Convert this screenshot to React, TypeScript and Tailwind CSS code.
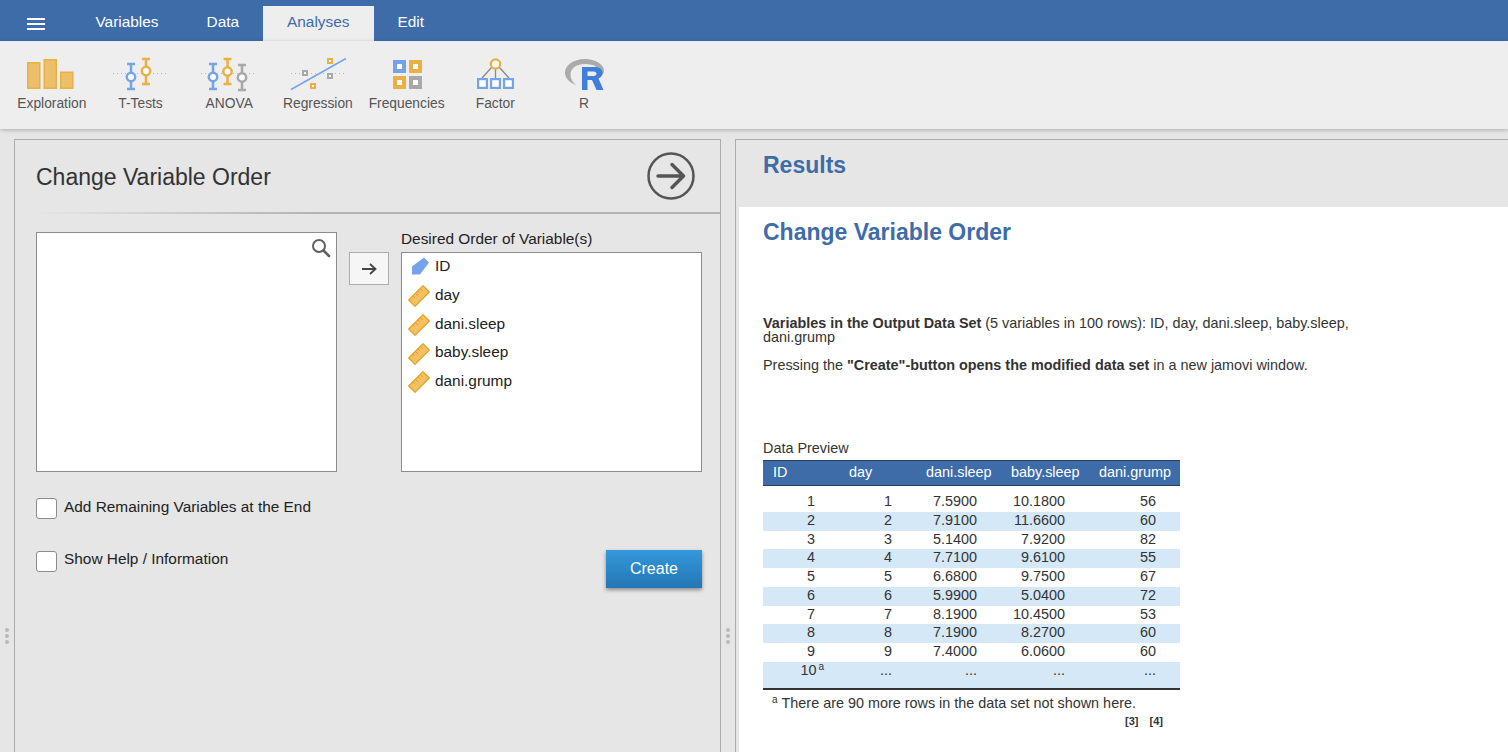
const BLUE = '#74a3ec';
const ORANGE = '#ebb044';
const GREY = '#a8a8a8';

const tabs = ['Variables', 'Data', 'Analyses', 'Edit'];

const rows = [
  ['1', '1', '7.5900', '10.1800', '56'],
  ['2', '2', '7.9100', '11.6600', '60'],
  ['3', '3', '5.1400', '7.9200', '82'],
  ['4', '4', '7.7100', '9.6100', '55'],
  ['5', '5', '6.6800', '9.7500', '67'],
  ['6', '6', '5.9900', '5.0400', '72'],
  ['7', '7', '8.1900', '10.4500', '53'],
  ['8', '8', '7.1900', '8.2700', '60'],
  ['9', '9', '7.4000', '6.0600', '60'],
];

const variables = ['day', 'dani.sleep', 'baby.sleep', 'dani.grump'];

function Whisker({ x, y1, y2, cy, color }: { x: number; y1: number; y2: number; cy: number; color: string }) {
  return (
    <g stroke={color} strokeWidth="2.5" fill="none">
      <path d={`M${x} ${y1}V${cy - 4}M${x} ${cy + 4}V${y2}`} />
      <path d={`M${x - 4} ${y1}H${x + 4}M${x - 4} ${y2}H${x + 4}`} />
      <circle cx={x} cy={cy} r="4.2" fill="#fff" />
    </g>
  );
}

function Dotted({ x1, x2, y }: { x1: number; x2: number; y: number }) {
  return <path d={`M${x1} ${y}H${x2}`} stroke="#b5b5b5" strokeWidth="1" strokeDasharray="1 3" fill="none" />;
}

function Box({ x, y, s, color, w = 2 }: { x: number; y: number; s: number; color: string; w?: number }) {
  return <rect x={x + w / 2} y={y + w / 2} width={s - w} height={s - w} fill="#fff" stroke={color} strokeWidth={w} />;
}

function ToolIcon({ name }: { name: string }) {
  return (
    <svg width="60" height="40" viewBox="0 0 60 40">
      {name === 'Exploration' && (
        <g fill="#ecc06a" stroke={ORANGE} strokeWidth="1.5">
          <rect x="5.75" y="7.75" width="12" height="25.5" />
          <rect x="22.25" y="4.75" width="12" height="28.5" />
          <rect x="38.75" y="17.25" width="12" height="16" />
        </g>
      )}
      {name === 'T-Tests' && (
        <g>
          <Dotted x1={2} x2={57} y={18.5} />
          <Whisker x={20} y1={9} y2={34} cy={22} color={BLUE} />
          <Whisker x={35} y1={4} y2={29} cy={16} color={ORANGE} />
        </g>
      )}
      {name === 'ANOVA' && (
        <g>
          <Dotted x1={2} x2={56} y={18.5} />
          <Whisker x={14} y1={9} y2={34} cy={22} color={BLUE} />
          <Whisker x={28.5} y1={4} y2={29} cy={16.5} color={ORANGE} />
          <Whisker x={43} y1={10} y2={35} cy={22.5} color={GREY} />
        </g>
      )}
      {name === 'Regression' && (
        <g>
          <Dotted x1={3} x2={58} y={18.5} />
          <Box x={14} y={15} s={6} color={GREY} />
          <Box x={39} y={18} s={6} color={GREY} />
          <Box x={39} y={3} s={6} color={ORANGE} />
          <Box x={22} y={28} s={6} color={ORANGE} />
          <path d="M3 34.5L58 3.5" stroke={BLUE} strokeWidth="1.5" fill="none" />
        </g>
      )}
      {name === 'Frequencies' && (
        <g>
          <Box x={16} y={5} s={13} color={BLUE} w={4} />
          <Box x={32} y={5} s={13} color={ORANGE} w={4} />
          <Box x={16} y={21} s={13} color={ORANGE} w={4} />
          <Box x={32} y={21} s={13} color={GREY} w={4} />
        </g>
      )}
      {name === 'Factor' && (
        <g>
          <path d="M27 12L17 23M30.5 14V23M34 12L44 23" stroke="#8a8a8a" strokeWidth="1.3" fill="none" />
          <circle cx="30.5" cy="9" r="4.7" fill="#fff" stroke={ORANGE} strokeWidth="2.2" />
          <Box x={12} y={23} s={11} color={BLUE} w={2.2} />
          <Box x={25} y={23} s={11} color={BLUE} w={2.2} />
          <Box x={38} y={23} s={11} color={BLUE} w={2.2} />
        </g>
      )}
      {name === 'R' && (
        <g>
          <path
            d="M31 4C19 4 11 10.500 11 17.500C11 23 15.500 27.500 22 30C18.500 27 16.500 23.500 16.500 19.500C16.500 13 23 9 31 9C40 9 45.500 12.500 45.500 17.500C45.500 19 45 20.500 44 22C48 21 50 18.500 50 16C50 9 41 4 31 4Z"
            fill="#aaaaaa"
          />
          <path
            fillRule="evenodd"
            d="M28 12H41C46 12 48.500 14.500 48.500 18C48.500 20.500 47 22.500 44.500 23.500L49.500 35H42.500L38 25H33.500V35H28ZM33.500 16.500V21H39.500C41.500 21 42.500 20 42.500 18.800C42.500 17.500 41.500 16.500 39.500 16.500Z"
            fill="#3f7fdc"
          />
        </g>
      )}
    </svg>
  );
}

function Ruler() {
  return (
    <svg width="22" height="22" viewBox="0 0 22 22" className="shrink-0">
      <path d="M15 0.700L21.300 7L7 21.300L0.700 15Z" fill="#f3c163" stroke="#e59f1c" strokeWidth="1.200" strokeLinejoin="round" />
      <path d="M12.500 3.500L15 6M10 6L11.700 7.700M7.500 8.500L10 11M5 11L6.700 12.700" stroke="#e59f1c" strokeWidth="1" fill="none" />
    </svg>
  );
}

function IdTag() {
  return (
    <svg width="18" height="18" viewBox="0 0 18 18" className="shrink-0">
      <path d="M13 0.500L18 5.500L9 17.500H1V9.500Z" fill={BLUE} />
    </svg>
  );
}

function Grip() {
  return (
    <div className="flex flex-col gap-[2px]">
      <div className="w-[4px] h-[4px] rounded-full bg-[#b9b9b9]" />
      <div className="w-[4px] h-[4px] rounded-full bg-[#b9b9b9]" />
      <div className="w-[4px] h-[4px] rounded-full bg-[#b9b9b9]" />
    </div>
  );
}

function Check({ label, className, labelClass }: { label: string; className: string; labelClass: string }) {
  return (
    <label className={`flex items-center gap-[7px] text-[15.4px] text-[#222] ${className}`}>
      <span className="w-[21px] h-[21px] bg-white border border-[#8c8c8c] rounded-[3px]" />
      <span className={`relative ${labelClass}`}>{label}</span>
    </label>
  );
}

const COLS = 'grid grid-cols-[76px_77px_85px_88px_91px]';

export default function App() {
  return (
    <div className="h-[752px] w-[1508px] overflow-hidden bg-[#e6e6e6] relative flex flex-col font-['Liberation_Sans',Arial,sans-serif]">
      {/* top tabs */}
      <div className="h-[41px] bg-[#3e6ca8] flex items-end shrink-0">
        <div className="w-[71.500px] h-full flex items-center pl-[27px]">
          <div className="flex flex-col gap-[3px] pt-[6px]">
            <div className="w-[18px] h-[2px] bg-white" />
            <div className="w-[18px] h-[2px] bg-white" />
            <div className="w-[18px] h-[2px] bg-white" />
          </div>
        </div>
        <div className="flex">
          {tabs.map((t) => (
            <div
              key={t}
              className={`h-[35px] px-[24px] flex items-center pb-[3px] text-[15.4px] ${
                t === 'Analyses' ? 'bg-[#eeeeee] text-[#3e6ca8]' : 'text-white'
              }`}
            >
              {t}
            </div>
          ))}
        </div>
      </div>

      {/* ribbon */}
      <div className="h-[88px] bg-[#eeeeee] shrink-0 pl-[7.5px] flex shadow-[0_1px_4px_rgba(0,0,0,0.25)] z-10">
        {['Exploration', 'T-Tests', 'ANOVA', 'Regression', 'Frequencies', 'Factor', 'R'].map((n) => (
          <div key={n} className="w-[88.700px] flex flex-col items-center pt-[14px]">
            <ToolIcon name={n} />
            <div className="text-[13.8px] leading-[16px] mt-[1px] text-[#555] whitespace-nowrap">{n}</div>
          </div>
        ))}
      </div>

      {/* panels */}
      <div className="flex-1 flex pt-[10px] pl-[14px] min-h-0">
        <div className="w-[707px] border border-b-0 border-[#ababab] bg-[#e6e6e6] shrink-0 flex flex-col">
          <div className="h-[74px] ml-[21px] pr-[25px] flex items-center justify-between shrink-0 border-b-2 border-b-[#b4b4b4] [border-image:linear-gradient(to_right,#e6e6e6,#b4b4b4_40%)_1]">
            <div className="text-[23px] text-[#333] relative top-[1px]">Change Variable Order</div>
            <svg width="48" height="48" viewBox="0 0 48 48">
              <circle cx="24" cy="24" r="22.500" fill="none" stroke="#555" strokeWidth="2.500" />
              <path d="M11 24H36M25 12.500L36.500 24L25 35.500" fill="none" stroke="#555" strokeWidth="3.500" strokeLinecap="round" strokeLinejoin="round" />
            </svg>
          </div>

          <div className="flex pl-[21px] pt-[18px] shrink-0">
            <div className="w-[301px] h-[240px] bg-white border border-[#8c8c8c] flex justify-end pt-[5px] pr-[5px]">
              <svg width="20" height="20" viewBox="0 0 20 20">
                <circle cx="8" cy="8" r="6" fill="none" stroke="#5f5f5f" strokeWidth="2" />
                <path d="M12.500 12.500L18 18" stroke="#5f5f5f" strokeWidth="2.500" strokeLinecap="round" />
              </svg>
            </div>
            <div className="w-[64px] pl-[12px] pt-[20px]">
              <div className="w-[40px] h-[33px] bg-[#f6f6f6] border border-[#acacac] flex items-center justify-center">
                <svg width="16" height="14" viewBox="0 0 16 14">
                  <path d="M1 7H14M9 2L14.500 7L9 12" fill="none" stroke="#444" strokeWidth="1.800" />
                </svg>
              </div>
            </div>
            <div className="w-[301px] relative">
              <div className="absolute left-0 top-[-2px] text-[15.4px] leading-[18px] text-[#222] whitespace-nowrap">
                Desired Order of Variable(s)
              </div>
              <div className="mt-[20px] h-[220px] bg-white border border-[#8c8c8c] flex flex-col text-[15.4px] text-[#222]">
                <div className="h-[28.750px] flex items-center pl-[9px] gap-[6px] pb-[3px]">
                  <IdTag />
                  <span>ID</span>
                </div>
                {variables.map((v) => (
                  <div key={v} className="h-[28.750px] flex items-center pl-[6px] gap-[5px]">
                    <Ruler />
                    <span className="relative top-[-1.6px]">{v}</span>
                  </div>
                ))}
              </div>
            </div>
          </div>

          <Check label="Add Remaining Variables at the End" className="ml-[21px] mt-[25px]" labelClass="top-[-2px]" />
          <div className="flex items-start justify-between pl-[21px] pr-[18px] mt-[30px]">
            <Check label="Show Help / Information" className="" labelClass="top-[-3px]" />
            <div className="w-[96px] h-[38px] flex items-center justify-center text-[16px] text-white bg-gradient-to-b from-[#3498db] to-[#2477b3] shadow-[0_2px_4px_rgba(0,0,0,0.4)]">
              Create
            </div>
          </div>
        </div>

        <div className="ml-[14px] flex-1 border-l border-t border-[#ababab] flex flex-col min-w-0">
          <div className="h-[67px] pl-[27px] pt-[11px] shrink-0">
            <div className="text-[23px] leading-[28px] font-bold text-[#3e6ca8]">Results</div>
          </div>
          <div className="flex-1 ml-[3px] bg-white pl-[24px] pt-[11px] text-[#333]">
            <div className="text-[23px] leading-[28px] font-bold text-[#3e6ca8]">Change Variable Order</div>
            <div className="mt-[70px] w-[600px] text-[14.4px] leading-[14px]">
              <b>Variables in the Output Data Set</b> (5 variables in 100 rows): ID, day, dani.sleep, baby.sleep,
              dani.grump
            </div>
            <div className="mt-[13px] text-[14.4px] leading-[16px]">
              Pressing the <b>"Create"-button opens the modified data set</b> in a new jamovi window.
            </div>

            <div className="mt-[67px] text-[14.4px] leading-[16px]">Data Preview</div>
            <div className="w-[417px] mt-[4px] text-[14.4px]">
              <div className={`${COLS} h-[26px] pb-[1px] items-center bg-[#3e6ca8] text-white border-y border-[#2b3f5c]`}>
                <div className="pl-[10px]">ID</div>
                <div className="pl-[10px]">day</div>
                <div className="pl-[10px]">dani.sleep</div>
                <div className="pl-[10px]">baby.sleep</div>
                <div className="pl-[10px]">dani.grump</div>
              </div>
              <div className="h-[7px]" />
              {rows.map((r, i) => (
                <div key={i} className={`${COLS} h-[18.750px] pb-[2.5px] leading-[16px] items-center ${i % 2 === 1 ? 'bg-[#d5e8f7]' : ''}`}>
                  {r.map((c, j) => (
                    <div key={j} className="text-right pr-[24px]">
                      {c}
                    </div>
                  ))}
                </div>
              ))}
              <div className={`${COLS} h-[28px] pb-[9px] leading-[16px] items-center bg-[#d5e8f7] border-b-2 border-[#333]`}>
                <div className="text-right pr-[15px]">
                  10<sup className="text-[10px] ml-[2px]">a</sup>
                </div>
                <div className="text-right pr-[24px]">...</div>
                <div className="text-right pr-[24px]">...</div>
                <div className="text-right pr-[24px]">...</div>
                <div className="text-right pr-[24px]">...</div>
              </div>
              <div className="pl-[9px] mt-[5px] leading-[16px]">
                <sup className="text-[10px] mr-[4px]">a</sup>There are 90 more rows in the data set not shown here.
              </div>
              <div className="flex justify-end gap-[11px] pr-[17px] mt-[4px] text-[11px] leading-[12px] font-bold">
                <span>[3]</span>
                <span>[4]</span>
              </div>
            </div>
          </div>
        </div>
      </div>

      {/* resize handles */}
      <div className="absolute left-[5px] top-[628px]">
        <Grip />
      </div>
      <div className="absolute left-[726px] top-[628px]">
        <Grip />
      </div>
    </div>
  );
}
